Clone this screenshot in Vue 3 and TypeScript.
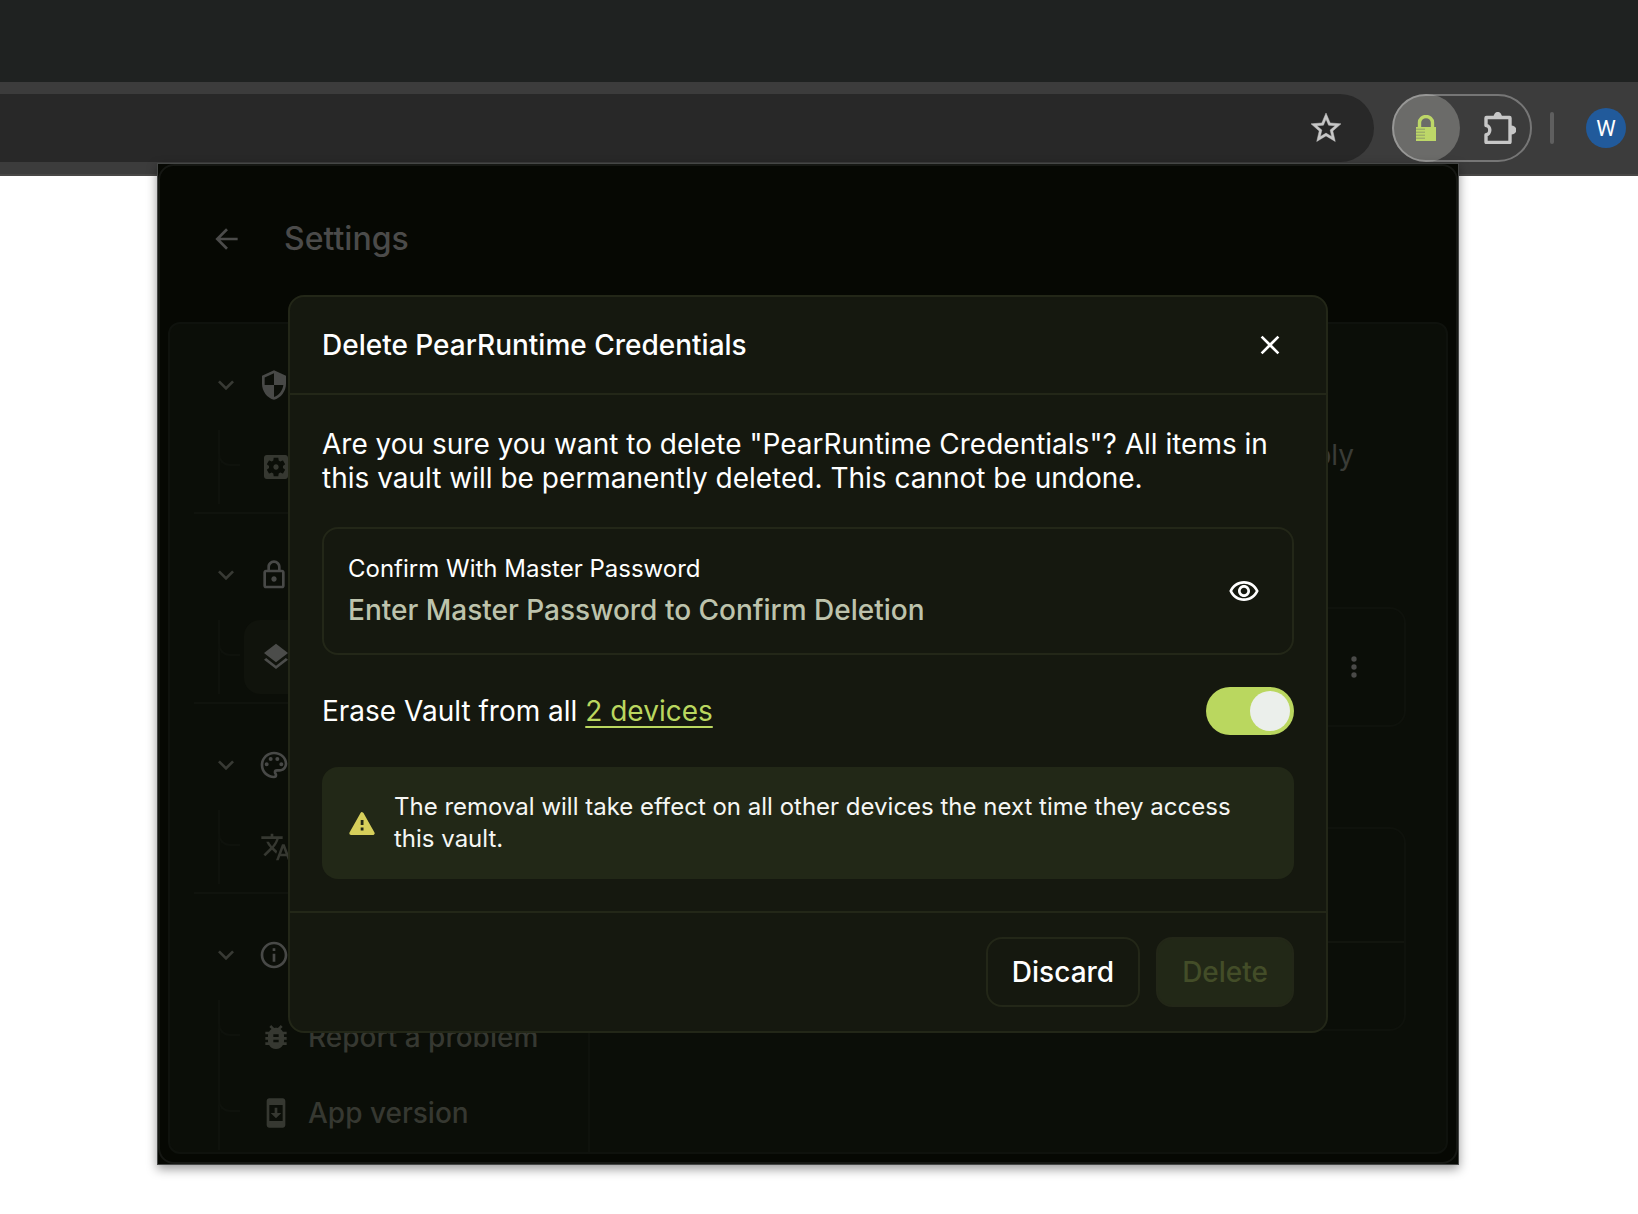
<script setup lang="ts">
import { ref } from 'vue'

interface SectionItem {
  label: string
  icon: string
  selected?: boolean
}

interface Section {
  id: string
  icon: string
  items: SectionItem[]
}

const icons: Record<string, string> = {
  chevron: 'M16.59 8.59L12 13.17 7.41 8.59 6 10l6 6 6-6z',
  security:
    'M12 1L3 5v6c0 5.55 3.84 10.74 9 12 5.16-1.26 9-6.45 9-12V5l-9-4zm0 10.99h7c-.53 4.12-3.28 7.79-7 8.94V12H5V6.3l7-3.11v8.8z',
  gear:
    'M12 10c-1.1 0-2 .9-2 2s.9 2 2 2 2-.9 2-2-.9-2-2-2zm7-7H5c-1.11 0-2 .9-2 2v14c0 1.1.89 2 2 2h14c1.11 0 2-.9 2-2V5c0-1.1-.89-2-2-2zm-1.75 9c0 .23-.02.46-.05.68l1.48 1.16c.13.11.17.3.08.45l-1.4 2.42c-.09.15-.27.21-.43.15l-1.74-.7c-.36.28-.76.51-1.18.69l-.26 1.85c-.03.17-.18.3-.35.3h-2.8c-.17 0-.32-.13-.35-.29l-.26-1.85c-.43-.18-.82-.41-1.18-.69l-1.74.7c-.16.06-.34 0-.43-.15l-1.4-2.42c-.09-.15-.05-.34.08-.45l1.48-1.16c-.03-.23-.05-.46-.05-.69 0-.23.02-.46.05-.68l-1.48-1.16c-.13-.11-.17-.3-.08-.45l1.4-2.42c.09-.15.27-.21.43-.15l1.74.7c.36-.28.76-.51 1.18-.69l.26-1.85c.03-.17.18-.3.35-.3h2.8c.17 0 .32.13.35.29l.26 1.85c.43.18.82.41 1.18.69l1.74-.7c.16-.06.34 0 .43.15l1.4 2.42c.09.15.05.34-.08.45l-1.48 1.16c.03.23.05.46.05.69z',
  lock:
    'M18 8h-1V6c0-2.76-2.24-5-5-5S7 3.24 7 6v2H6c-1.1 0-2 .9-2 2v10c0 1.1.9 2 2 2h12c1.1 0 2-.9 2-2V10c0-1.1-.9-2-2-2zM9 6c0-1.66 1.34-3 3-3s3 1.34 3 3v2H9V6zm9 14H6V10h12v10zm-6-3c1.1 0 2-.9 2-2s-.9-2-2-2-2 .9-2 2 .9 2 2 2z',
  layers:
    'M11.99 18.54l-7.37-5.73L3 14.07l9 7 9-7-1.63-1.27-7.38 5.74zM12 16l7.36-5.73L21 9l-9-7-9 7 1.63 1.27L12 16z',
  palette:
    'M12 22C6.49 22 2 17.51 2 12S6.49 2 12 2s10 4.04 10 9c0 3.31-2.69 6-6 6h-1.77c-.28 0-.5.22-.5.5 0 .12.05.23.13.33.41.47.64 1.06.64 1.67A2.5 2.5 0 0 1 12 22zm0-18c-4.41 0-8 3.59-8 8s3.59 8 8 8c.28 0 .5-.22.5-.5a.54.54 0 0 0-.14-.35c-.41-.46-.63-1.05-.63-1.65a2.5 2.5 0 0 1 2.5-2.5H16c2.21 0 4-1.79 4-4 0-3.86-3.59-7-8-7zM5 11.5a1.5 1.5 0 1 0 3 0a1.5 1.5 0 1 0-3 0zM8 7.5a1.5 1.5 0 1 0 3 0a1.5 1.5 0 1 0-3 0zM13 7.5a1.5 1.5 0 1 0 3 0a1.5 1.5 0 1 0-3 0zM16 11.5a1.5 1.5 0 1 0 3 0a1.5 1.5 0 1 0-3 0z',
  translate:
    'M12.87 15.07l-2.54-2.51.03-.03c1.74-1.94 2.98-4.17 3.71-6.53H17V4h-7V2H8v2H1v1.99h11.17C11.5 7.92 10.44 9.75 9 11.35 8.07 10.32 7.3 9.19 6.69 8h-2c.73 1.63 1.73 3.17 2.98 4.56l-5.09 5.02L4 19l5-5 3.11 3.11.76-2.04zM18.5 10h-2L12 22h2l1.12-3h4.75L21 22h2l-4.5-12zm-2.62 7l1.62-4.33L19.12 17h-3.24z',
  info:
    'M11 7h2v2h-2zM11 11h2v6h-2zM12 2C6.48 2 2 6.48 2 12s4.48 10 10 10 10-4.48 10-10S17.52 2 12 2zm0 18c-4.41 0-8-3.59-8-8s3.59-8 8-8 8 3.59 8 8-3.59 8-8 8z',
  bug:
    'M20 8h-2.81c-.45-.78-1.07-1.45-1.82-1.96L17 4.41 15.59 3l-2.17 2.17C12.96 5.06 12.49 5 12 5c-.49 0-.96.06-1.41.17L8.41 3 7 4.41l1.62 1.63C7.88 6.55 7.26 7.22 6.81 8H4v2h2.09c-.05.33-.09.66-.09 1v1H4v2h2v1c0 .34.04.67.09 1H4v2h2.81c1.04 1.79 2.97 3 5.19 3s4.15-1.21 5.19-3H20v-2h-2.09c.05-.33.09-.66.09-1v-1h2v-2h-2v-1c0-.34-.04-.67-.09-1H20V8zm-6 8h-4v-2h4v2zm0-4h-4v-2h4v2z',
  version:
    'M17 1H7c-1.1 0-2 .9-2 2v18c0 1.1.9 2 2 2h10c1.1 0 2-.9 2-2V3c0-1.1-.9-2-2-2zm0 17H7V6h10v12zM11 8h2v4h3l-4 4-4-4h3z',
}

const sections: Section[] = [
  { id: 'security', icon: 'security', items: [{ label: '', icon: 'gear' }] },
  { id: 'vaults', icon: 'lock', items: [{ label: '', icon: 'layers', selected: true }] },
  { id: 'appearance', icon: 'palette', items: [{ label: '', icon: 'translate' }] },
  {
    id: 'about',
    icon: 'info',
    items: [
      { label: 'Report a problem', icon: 'bug' },
      { label: 'App version', icon: 'version' },
    ],
  },
]

const password = ref('')
const showPassword = ref(false)
const eraseAll = ref(true)
</script>

<template>
  <div class="browser">
    <div class="tabstrip"></div>
    <div class="toolbar">
      <div class="address">
        <button class="plain" type="button" aria-label="Bookmark this tab">
          <svg class="star" viewBox="0 0 24 24" fill="currentColor">
            <path d="M22 9.24l-7.19-.62L12 2 9.19 8.63 2 9.24l5.46 4.73L5.82 21 12 17.27 18.18 21l-1.63-7.03L22 9.24zM12 15.4l-3.76 2.27 1-4.28-3.32-2.88 4.38-.38L12 6.1l1.71 4.04 4.38.38-3.32 2.88 1 4.28L12 15.4z" stroke="currentColor" stroke-width=".3" />
          </svg>
        </button>
      </div>
      <div class="extensions">
        <button class="plain ext-active" type="button" aria-label="Password manager">
          <svg class="ext-lock" viewBox="0 0 20 26">
            <path d="M3.5 12V7.5a6.5 6 0 0 1 13 0V12" fill="none" stroke="#bdd768" stroke-width="3.4" />
            <path d="M0 12h20v14H0z" fill="#bdd768" />
            <path d="M0 14.2h9M0 17.2h9M0 20.2h9M0 23.2h9" stroke="#8f9d69" stroke-width="1" />
          </svg>
        </button>
        <button class="plain ext-more" type="button" aria-label="Extensions">
          <svg class="puzzle" viewBox="0 0 32 32">
            <path d="M3 5.5h22.5q.5 0 .5.5v24q0 .5-.5.5H2.500q-.5 0-.5-.5v-7.300a3.800 4.600 0 0 0 0-9.200V6q0-.5.5-.5z" fill="none" stroke="#c7c7c7" stroke-width="3.4" stroke-linejoin="round" />
            <path d="M9.500 5a4 4.8 0 0 1 8.500 0zM27 13.500a4.800 4 0 0 1 0 9z" fill="#c7c7c7" />
          </svg>
        </button>
      </div>
      <span class="divider"></span>
      <button class="plain avatar" type="button">W</button>
    </div>

    <div class="popup">
      <div class="frame">
        <header class="top">
          <button class="plain back" type="button" aria-label="Back">
            <svg class="icon" viewBox="0 0 24 24"><path d="M20 12H5M12 4.7L4.7 12l7.3 7.3" fill="none" stroke="currentColor" stroke-width="2" /></svg>
          </button>
          <h1>Settings</h1>
        </header>
        <div class="panel">
          <nav class="sidebar">
            <section v-for="s in sections" :key="s.id" class="section">
              <button class="plain head" type="button" :aria-label="s.id">
                <svg class="icon chev" viewBox="0 0 24 24"><path :d="icons.chevron" /></svg>
                <svg class="icon" viewBox="0 0 24 24"><path :d="icons[s.icon]" fill-rule="evenodd" /></svg>
              </button>
              <ul class="tree">
                <li v-for="item in s.items" :key="item.icon">
                  <span class="branch"></span>
                  <button class="plain item" :class="{ selected: item.selected }" type="button" :aria-label="item.label || item.icon">
                    <svg class="icon" viewBox="0 0 24 24"><path :d="icons[item.icon]" fill-rule="evenodd" /></svg>
                    <span>{{ item.label }}</span>
                  </button>
                </li>
              </ul>
            </section>
          </nav>
          <main class="content">
            <p class="hint">ply</p>
            <div class="card vault">
              <button class="plain" type="button" aria-label="More">
                <svg class="icon" viewBox="0 0 24 24"><circle cx="12" cy="6" r="2" /><circle cx="12" cy="12" r="2" /><circle cx="12" cy="18" r="2" /></svg>
              </button>
            </div>
            <div class="card list">
              <div class="row"></div>
              <div class="row short"></div>
            </div>
          </main>
        </div>
      </div>

      <div class="overlay">
        <form class="modal" role="dialog" aria-labelledby="dlg-title" @submit.prevent>
          <div class="modal-head">
            <h2 id="dlg-title">Delete PearRuntime Credentials</h2>
            <button class="plain close" type="button" aria-label="Close">
              <svg class="icon" viewBox="0 0 24 24"><path d="M5.7 5.7l12.6 12.6M18.3 5.7L5.7 18.3" stroke="currentColor" stroke-width="2" /></svg>
            </button>
          </div>
          <div class="modal-body">
            <p class="question">Are you sure you want to delete "PearRuntime Credentials"? All items in this vault will be permanently deleted. This cannot be undone.</p>
            <div class="field">
              <div class="field-text">
                <label for="master">Confirm With Master Password</label>
                <input id="master" v-model="password" :type="showPassword ? 'text' : 'password'" placeholder="Enter Master Password to Confirm Deletion" />
              </div>
              <button class="plain eye" type="button" aria-label="Show password" @click="showPassword = !showPassword">
                <svg class="icon" viewBox="0 0 24 23"><path d="M12 6c3.79 0 7.17 2.13 8.82 5.5C19.17 14.87 15.79 17 12 17s-7.17-2.13-8.82-5.5C4.83 8.13 8.21 6 12 6m0-2C7 4 2.73 7.11 1 11.5 2.73 15.89 7 19 12 19s9.27-3.11 11-7.5C21.27 7.11 17 4 12 4zm0 5c1.38 0 2.5 1.12 2.5 2.5S13.38 14 12 14s-2.5-1.12-2.5-2.5S10.62 9 12 9m0-2c-2.48 0-4.5 2.02-4.5 4.5S9.52 16 12 16s4.5-2.02 4.5-4.5S14.48 7 12 7z" /></svg>
              </button>
            </div>
            <div class="erase">
              <span><label for="erase">Erase Vault from all</label> <a href="#devices">2 devices</a></span>
              <input id="erase" v-model="eraseAll" class="toggle" type="checkbox" role="switch" />
            </div>
            <div class="warning">
              <svg class="icon warn" viewBox="0 0 32 32">
                <path d="M16 6.900L27 26.300H5z" fill="#d6cf5b" stroke="#d6cf5b" stroke-width="3.4" stroke-linejoin="round" />
                <path d="M14.700 13h2.800v5h-2.800zM14.700 20.600h2.800v2.800h-2.800z" fill="#222817" />
              </svg>
              <p>The removal will take effect on all other devices the next time they access this vault.</p>
            </div>
          </div>
          <div class="modal-foot">
            <button class="btn discard" type="button">Discard</button>
            <button class="btn delete" type="submit" disabled>Delete</button>
          </div>
        </form>
      </div>
    </div>
  </div>
</template>

<style>
body {
  margin: 0;
  background: #fff;
}
</style>

<style scoped>
* {
  box-sizing: border-box;
}

.browser {
  font-family: Inter, "Liberation Sans", sans-serif;
  color: #fff;
  padding-bottom: 48px;
}

h1,
h2,
p,
ul {
  margin: 0;
  padding: 0;
}

.plain {
  display: flex;
  align-items: center;
  justify-content: center;
  padding: 0;
  border: 0;
  background: none;
  color: inherit;
  font: inherit;
}

.icon {
  display: block;
  flex: none;
  width: 32px;
  height: 32px;
  fill: currentColor;
}

.tabstrip {
  height: 82px;
  background: #1f2221;
}

.toolbar {
  display: flex;
  align-items: center;
  height: 94px;
  padding-right: 12px;
  border-bottom: 2px solid #484746;
  background: #3c3c3c;
}

.address {
  display: flex;
  flex: 1;
  align-items: center;
  justify-content: flex-end;
  height: 68px;
  margin-right: 18px;
  padding-right: 30px;
  border-radius: 0 34px 34px 0;
  background: #282828;
  color: #c7c7c7;
}

.star {
  width: 36px;
  height: 36px;
}

.extensions {
  position: relative;
  display: flex;
  width: 140px;
  height: 68px;
  border-radius: 34px;
}

.extensions::after {
  content: "";
  position: absolute;
  inset: 0;
  border: 2px solid rgba(255, 255, 255, 0.3);
  border-radius: 34px;
  pointer-events: none;
}

.ext-active {
  width: 68px;
  height: 68px;
  border-radius: 50%;
  background: #6b6b69;
}

.ext-lock {
  width: 20px;
  height: 26px;
}

.ext-more {
  flex: 1;
  padding-left: 8px;
}

.puzzle {
  width: 32px;
  height: 32px;
}

.divider {
  width: 4px;
  height: 32px;
  margin: 0 32px 0 18px;
  border-radius: 2px;
  background: #5f5f5f;
}

.avatar {
  width: 40px;
  height: 40px;
  border-radius: 50%;
  background: #215a9b;
  font-family: Roboto, sans-serif;
  font-size: 22px;
}

.popup {
  position: relative;
  margin: -13px 179px 0 157px;
  border: 1px solid #454746;
  background: #060803;
  box-shadow: 0 4px 10px rgba(0, 0, 0, 0.4);
}

.frame {
  padding: 0 8px 8px;
  border: 2px solid #151713;
  border-radius: 16px;
}

.top {
  display: flex;
  align-items: center;
  height: 156px;
  padding: 0 0 10px 43px;
  color: #4b4b4a;
}

.back {
  width: 32px;
  height: 32px;
  margin-right: 41px;
}

h1 {
  font-size: 32px;
  line-height: 40px;
  font-weight: 500;
}

.panel {
  display: flex;
  border: 2px solid #0f120d;
  border-radius: 12px;
  background: #0b0e08;
}

.sidebar {
  flex: 0 0 420px;
  padding: 0 24px;
  border-right: 2px solid #0f120c;
}

.section {
  padding: 16px 0 8px;
  border-bottom: 2px solid #10130d;
}

.section:last-child {
  padding-bottom: 2px;
  border-bottom: 0;
}

.head {
  justify-content: flex-start;
  gap: 16px;
  width: 100%;
  height: 90px;
  padding-left: 16px;
  color: #484947;
}

.chev {
  color: #383a34;
}

.tree {
  display: flex;
  flex-direction: column;
  gap: 2px;
  margin-left: 24px;
  border-left: 2px solid #0f120c;
  list-style: none;
}

.tree li {
  display: flex;
  align-items: flex-start;
  gap: 4px;
}

.branch {
  flex: none;
  width: 22px;
  height: 36px;
  margin-left: -2px;
  border: solid #0f120c;
  border-width: 0 0 2px 2px;
  border-bottom-left-radius: 12px;
}

.item {
  flex: 1;
  justify-content: flex-start;
  gap: 16px;
  height: 74px;
  padding-left: 16px;
  border-radius: 16px;
  color: #363831;
  font-size: 28px;
  font-weight: 500;
}

.item.selected {
  background: #10130c;
  color: #4b4c4a;
}

.content {
  flex: 1;
  padding: 114px 40px 0;
}

.hint {
  padding-right: 52px;
  color: #3a3c37;
  font-size: 28px;
  line-height: 34px;
  text-align: right;
}

.card {
  border: 2px solid #0f120c;
  border-radius: 16px;
}

.vault {
  display: flex;
  align-items: center;
  justify-content: flex-end;
  height: 120px;
  margin: 135px 0 100px;
  padding-right: 34px;
  color: #4a4a48;
}

.row {
  height: 112px;
}

.row.short {
  height: 88px;
  border-top: 2px solid #12150e;
}

.overlay {
  position: absolute;
  inset: 0;
  display: flex;
  align-items: center;
  justify-content: center;
}

.modal {
  width: 80%;
  border: 2px solid #232718;
  border-radius: 16px;
  background: #15180f;
}

.modal-head {
  display: flex;
  align-items: center;
  justify-content: space-between;
  height: 98px;
  padding: 0 40px 0 32px;
  border-bottom: 2px solid #232718;
}

h2 {
  font-size: 28px;
  line-height: 34px;
  font-weight: 500;
}

.modal-body {
  display: flex;
  flex-direction: column;
  gap: 32px;
  padding: 32px;
}

.question {
  font-size: 28px;
  line-height: 34px;
}

.field {
  display: flex;
  align-items: center;
  justify-content: space-between;
  height: 128px;
  padding: 0 32px 0 24px;
  border: 2px solid #232718;
  border-radius: 16px;
}

.field-text {
  display: flex;
  flex: 1;
  flex-direction: column;
  gap: 8px;
  padding-bottom: 3px;
}

.field label {
  font-size: 24px;
  line-height: 32px;
}

.field input {
  width: 100%;
  height: 34px;
  padding: 0;
  border: 0;
  outline: 0;
  background: none;
  color: #fff;
  font: 500 28px/34px Inter, "Liberation Sans", sans-serif;
}

.field input::placeholder {
  color: #bdc3ac;
  opacity: 1;
}

.erase {
  display: flex;
  align-items: center;
  justify-content: space-between;
  font-size: 28px;
  line-height: 34px;
}

.erase a {
  color: #bad75f;
  text-decoration: underline;
  text-decoration-thickness: 2px;
  text-underline-offset: 5px;
}

.toggle {
  display: flex;
  align-items: center;
  justify-content: flex-end;
  width: 88px;
  height: 48px;
  margin: 0;
  padding: 4px;
  border-radius: 24px;
  background: #bad75f;
  appearance: none;
}

.toggle::before {
  content: "";
  width: 40px;
  height: 40px;
  border-radius: 50%;
  background: #ebefeb;
}

.toggle:not(:checked) {
  justify-content: flex-start;
  background: #232718;
}

.warning {
  display: flex;
  align-items: center;
  gap: 16px;
  padding: 24px;
  border-radius: 16px;
  background: #222817;
  color: #f6f7f4;
  font-size: 24px;
  line-height: 32px;
}

.modal-foot {
  display: flex;
  justify-content: flex-end;
  gap: 16px;
  padding: 24px 32px;
  border-top: 2px solid #232718;
}

.btn {
  height: 70px;
  padding: 0 24px;
  border: 2px solid #232718;
  border-radius: 16px;
  background: none;
  color: #fff;
  font: 500 28px/34px Inter, "Liberation Sans", sans-serif;
}

.btn.delete {
  background: #222817;
  color: #434d28;
}
</style>
